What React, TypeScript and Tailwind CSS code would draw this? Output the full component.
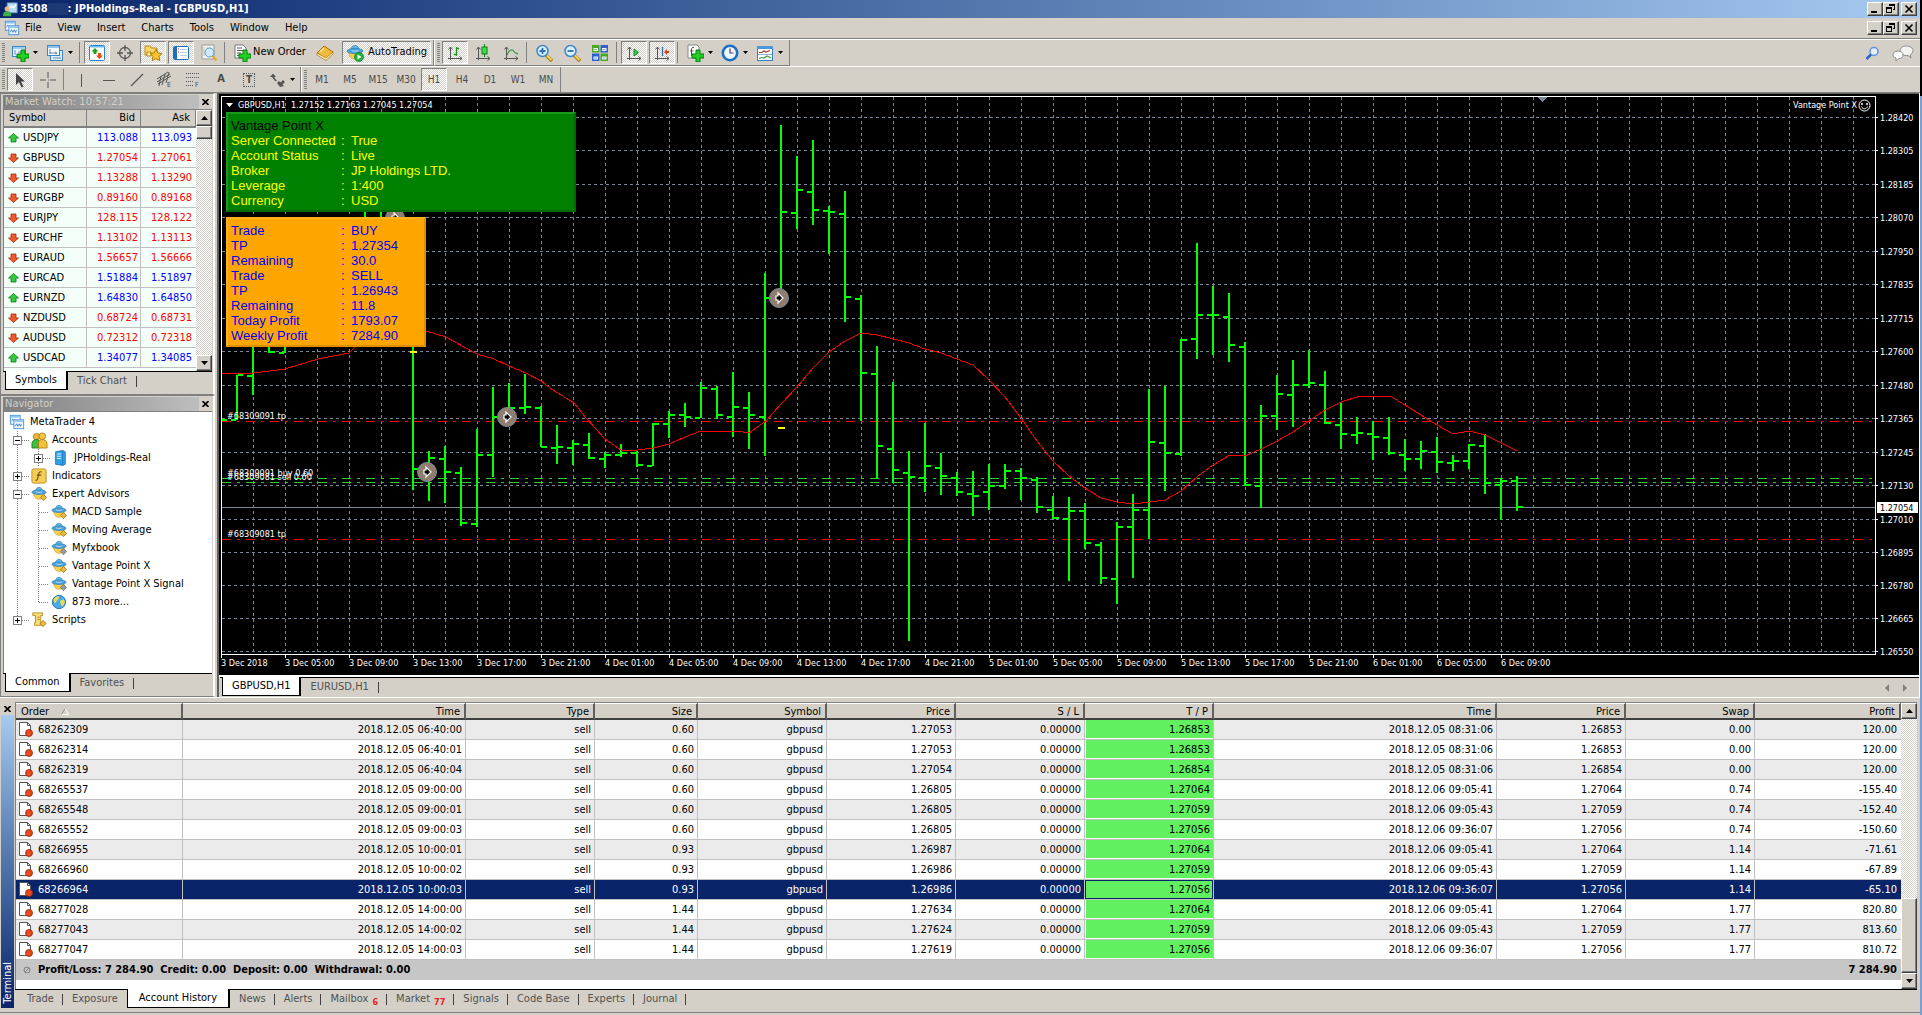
import type { ReactNode } from "react";
import clsx from "clsx";

const RAISED =
  "border border-white border-r-[#404040] border-b-[#404040] bg-[#d4d0c8] shadow-[inset_-1px_-1px_0_#808080]";
const DITHER = "bg-[repeating-conic-gradient(#fff_0_25%,#d4d0c8_0_50%)] bg-[length:2px_2px]";

type Direction = "up" | "down";

const quotes: { symbol: string; bid: string; ask: string; dir: Direction; blue: boolean }[] = [
  { symbol: "USDJPY", bid: "113.088", ask: "113.093", dir: "up", blue: true },
  { symbol: "GBPUSD", bid: "1.27054", ask: "1.27061", dir: "down", blue: false },
  { symbol: "EURUSD", bid: "1.13288", ask: "1.13290", dir: "down", blue: false },
  { symbol: "EURGBP", bid: "0.89160", ask: "0.89168", dir: "down", blue: false },
  { symbol: "EURJPY", bid: "128.115", ask: "128.122", dir: "down", blue: false },
  { symbol: "EURCHF", bid: "1.13102", ask: "1.13113", dir: "down", blue: false },
  { symbol: "EURAUD", bid: "1.56657", ask: "1.56666", dir: "down", blue: false },
  { symbol: "EURCAD", bid: "1.51884", ask: "1.51897", dir: "up", blue: true },
  { symbol: "EURNZD", bid: "1.64830", ask: "1.64850", dir: "up", blue: true },
  { symbol: "NZDUSD", bid: "0.68724", ask: "0.68731", dir: "down", blue: false },
  { symbol: "AUDUSD", bid: "0.72312", ask: "0.72318", dir: "down", blue: false },
  { symbol: "USDCAD", bid: "1.34077", ask: "1.34085", dir: "up", blue: true },
];

const orders: string[][] = [
  ["68262309", "2018.12.05 06:40:00", "0.60", "1.27053", "1.26853", "2018.12.05 08:31:06", "0.00", "120.00"],
  ["68262314", "2018.12.05 06:40:01", "0.60", "1.27053", "1.26853", "2018.12.05 08:31:06", "0.00", "120.00"],
  ["68262319", "2018.12.05 06:40:04", "0.60", "1.27054", "1.26854", "2018.12.05 08:31:06", "0.00", "120.00"],
  ["68265537", "2018.12.05 09:00:00", "0.60", "1.26805", "1.27064", "2018.12.06 09:05:41", "0.74", "-155.40"],
  ["68265548", "2018.12.05 09:00:01", "0.60", "1.26805", "1.27059", "2018.12.06 09:05:43", "0.74", "-152.40"],
  ["68265552", "2018.12.05 09:00:03", "0.60", "1.26805", "1.27056", "2018.12.06 09:36:07", "0.74", "-150.60"],
  ["68266955", "2018.12.05 10:00:01", "0.93", "1.26987", "1.27064", "2018.12.06 09:05:41", "1.14", "-71.61"],
  ["68266960", "2018.12.05 10:00:02", "0.93", "1.26986", "1.27059", "2018.12.06 09:05:43", "1.14", "-67.89"],
  ["68266964", "2018.12.05 10:00:03", "0.93", "1.26986", "1.27056", "2018.12.06 09:36:07", "1.14", "-65.10"],
  ["68277028", "2018.12.05 14:00:00", "1.44", "1.27634", "1.27064", "2018.12.06 09:05:41", "1.77", "820.80"],
  ["68277043", "2018.12.05 14:00:02", "1.44", "1.27624", "1.27059", "2018.12.06 09:05:43", "1.77", "813.60"],
  ["68277047", "2018.12.05 14:00:03", "1.44", "1.27619", "1.27056", "2018.12.06 09:36:07", "1.77", "810.72"],
];
const SELECTED_ORDER = "68266964";

// [high, low, open, close] per hour, in chart pixels; null where no tick is drawn
const bars: (number | null)[][] = [
  [339, 439, null, 420], [375, 420, 419, 375], [300, 395, 375, null], [300, 353, null, 352],
  [300, 353, 352, null], [260, 340, null, null], [240, 330, null, null], [230, 320, null, null],
  [220, 300, null, null], [190, 300, null, null], [190, 300, null, null], [200, 216, null, null],
  [300, 490, null, 469], [451, 501, null, 458], [446, 503, 458, 472], [467, 526, 472, 523],
  [429, 527, 523, 455], [387, 477, 454, 417], [383, 421, null, 408], [374, 414, 407, 407],
  [406, 447, 407, 447], [425, 464, 447, 447], [440, 465, 447, 444], [433, 459, 444, 458],
  [452, 468, 458, 455], [444, 457, 454, 453], [451, 467, 452, 465], [423, 466, 465, 424],
  [411, 438, 423, 415], [403, 427, 414, 417], [382, 418, 417, 388], [386, 419, 388, 415],
  [372, 437, 416, 407], [392, 449, 407, 415], [273, 456, 416, 298], [125, 298, null, 212],
  [156, 229, 212, 190], [140, 225, 191, 210], [206, 254, 210, 212], [191, 322, 213, 297],
  [295, 421, 298, 373], [346, 479, 373, 446], [382, 483, 448, 470], [451, 641, 472, 477],
  [423, 492, 477, 466], [453, 495, 467, 476], [472, 496, 477, 492], [471, 516, 493, 496],
  [464, 510, 491, 486], [464, 489, 485, 471], [468, 500, 470, 478], [477, 513, 479, 507],
  [496, 519, 509, 518], [497, 581, 518, 511], [503, 549, 510, 543], [542, 584, 544, 578],
  [522, 604, 578, 527], [494, 578, 526, 510], [389, 539, 509, 442], [386, 491, 442, 453],
  [339, 456, 453, 340], [243, 359, 338, 315], [286, 355, 314, 315], [293, 362, 316, 345],
  [342, 486, 346, 485], [405, 508, 485, 416], [375, 430, 415, 394], [360, 427, 394, 385],
  [350, 388, 384, 383], [371, 424, 384, 423], [403, 449, 424, 434], [417, 444, 434, 433],
  [421, 460, 433, 437], [417, 455, 437, 453], [439, 471, 454, 459], [441, 469, 458, 451],
  [437, 473, 451, 462], [455, 471, 462, 461], [444, 469, 460, 445], [434, 494, 445, 483],
  [478, 520, 484, 481], [476, 511, 480, 507],
];

const movingAverage =
  "221,373 244,374 253,373 270,371 285,369 318,359 349,353 355,347 380,332 405,327 426,331 446,337 464,347 477,354 494,359 509,366 526,373 541,381 553,390 574,403 586,418 605,439 621,450 638,450 653,448 669,444 685,437 701,431 736,431 749,433 766,421 781,404 797,387 813,368 829,352 845,341 861,333 877,335 894,339 909,343 925,349 941,353 957,359 973,365 989,380 1005,397 1021,418 1037,441 1053,461 1069,476 1085,488 1101,498 1117,502 1133,504 1149,502 1165,500 1181,491 1197,477 1213,465 1230,455 1245,456 1261,449 1277,441 1293,432 1309,421 1325,410 1341,402 1357,397 1365,396 1390,396 1405,405 1421,415 1437,425 1453,434 1469,431 1485,435 1501,443 1517,451";

const priceLevels: [string, number][] = [
  ["1.28420", 117], ["1.28305", 150], ["1.28185", 184], ["1.28070", 217], ["1.27950", 251],
  ["1.27835", 284], ["1.27715", 318], ["1.27600", 351], ["1.27480", 385], ["1.27365", 418],
  ["1.27245", 452], ["1.27130", 485], ["1.27010", 519], ["1.26895", 552], ["1.26780", 585],
  ["1.26665", 618], ["1.26550", 651],
];

const timeLabels = [
  "3 Dec 2018", "3 Dec 05:00", "3 Dec 09:00", "3 Dec 13:00", "3 Dec 17:00", "3 Dec 21:00",
  "4 Dec 01:00", "4 Dec 05:00", "4 Dec 09:00", "4 Dec 13:00", "4 Dec 17:00", "4 Dec 21:00",
  "5 Dec 01:00", "5 Dec 05:00", "5 Dec 09:00", "5 Dec 13:00", "5 Dec 17:00", "5 Dec 21:00",
  "6 Dec 01:00", "6 Dec 05:00", "6 Dec 09:00",
];

function Icon({ children, size = 18 }: { children: ReactNode; size?: number }) {
  return (
    <svg width={size} height={size} viewBox="0 0 18 18" fill="none" className="shrink-0" aria-hidden="true">
      {children}
    </svg>
  );
}

const GreenPlus = () => (
  <path d="M10 6h4v4h4v4h-4v4h-4v-4H6v-4h4z" fill="#1fd21f" stroke="#067a10" strokeWidth="1" />
);

const Axes = () => (
  <path d="M4.500 3v13M2 14.500h14M2.500 5.500l2-2.500 2 2.500M13.500 12.500l2.500 2-2.500 2" stroke="#555" />
);

function NewChartIcon() {
  return (
    <Icon>
      <rect x="1.500" y="2.500" width="13" height="10" fill="#eaf4fd" stroke="#3b86c4" />
      <path d="M2 3h12v2H2z" fill="#9ccdf2" />
      <path d="M4 6v5M7 8h3" stroke="#6c8ea8" />
      <GreenPlus />
    </Icon>
  );
}

function ProfilesIcon() {
  return (
    <Icon>
      <rect x="4.500" y="6.500" width="12" height="10" fill="#dceefb" stroke="#3b86c4" />
      <rect x="1.500" y="1.500" width="12" height="10" fill="#f2f9ff" stroke="#3b86c4" />
      <path d="M2 2h11v2H2z" fill="#8dc3ee" />
      <path d="M4 5v5M3 9h8M9 8l2 1-2 1M7 14h8" stroke="#6c8ea8" />
    </Icon>
  );
}

function MarketWatchIcon() {
  return (
    <Icon>
      <rect x="1.500" y="1.500" width="15" height="15" rx="1" fill="#fff" stroke="#2b86d1" />
      <path d="M2 2h14v1.500H2z" fill="#6db8ef" />
      <path d="M7 4l3.500 3.500H8.500V10h-3V7.500h-2z" fill="#19a319" />
      <path d="M11.500 15L8 11.500h2V9h3v2.500h2z" fill="#e34a1c" />
    </Icon>
  );
}

function CrosshairIcon() {
  return (
    <Icon>
      <circle cx="9" cy="9" r="5.500" stroke="#555" strokeWidth="1.300" />
      <path d="M9 1v6M9 11v6M1 9h6M11 9h6" stroke="#555" strokeWidth="1.300" />
    </Icon>
  );
}

function StarFolderIcon() {
  return (
    <Icon>
      <path d="M1 2h5l1 2h6v7H1z" fill="#f8d868" stroke="#bf8a12" />
      <path d="M3 8h4v4H3z" fill="#fdf0a8" stroke="#bf8a12" />
      <path d="M12 5l1.900 4 4.100.5-3 2.900.8 4.200L12 14.600l-3.800 2 .8-4.200-3-2.900 4.100-.5z" fill="#fbc52f" stroke="#b77c0a" />
    </Icon>
  );
}

function NavigatorIcon() {
  return (
    <Icon>
      <rect x="1.500" y="2.500" width="15" height="13" rx="1" fill="#fff" stroke="#1f6fc0" />
      <path d="M2 3h3v12H2z" fill="#1f6fc0" />
      <path d="M6 5h1M6 8h1" stroke="#d22" />
      <path d="M8 5.500h7M8 8.500h7M8 11.500h7" stroke="#b5cfe4" />
    </Icon>
  );
}

function TesterIcon() {
  return (
    <Icon>
      <path d="M2 1h12v14H2z" fill="#f4f4f0" stroke="#9a9a94" />
      <path d="M4 3v9M7 3v9M10 3v9" stroke="#c5c0b0" />
      <circle cx="9.500" cy="8.500" r="4.500" fill="#cfe8fb" stroke="#5b9ac9" />
      <path d="M12.500 12l4 4.500" stroke="#e0a92d" strokeWidth="2.500" />
    </Icon>
  );
}

function NewOrderIcon() {
  return (
    <Icon>
      <path d="M2 1h8l3 3v10H2z" fill="#fff" stroke="#777" />
      <path d="M4 4h5M4 6.500h7M4 9h4M4 11.500h3" stroke="#555" />
      <GreenPlus />
    </Icon>
  );
}

function BookIcon() {
  return (
    <Icon>
      <path d="M1 9l7-7 9 6-7 8z" fill="#f0bb3c" stroke="#a86c0b" />
      <path d="M1 9l9 5 7-6v2l-7 6.500L1 11z" fill="#fff3c4" stroke="#a86c0b" strokeWidth=".7" />
      <path d="M4 8l4-4" stroke="#fce39a" strokeWidth="1.500" />
    </Icon>
  );
}

function HatShape() {
  return (
    <>
      <path d="M3 8c0 4 2.500 7 6 7s6-3 6-7z" fill="#f7cf4e" stroke="#c89417" strokeWidth=".7" />
      <path d="M5 6c0-6 8-6 8 0z" fill="#66b7e6" stroke="#2b7cb3" strokeWidth=".7" />
      <ellipse cx="9" cy="7" rx="8" ry="2.600" fill="#4ba3d9" stroke="#2b7cb3" strokeWidth=".7" />
      <path d="M5.500 6.500c2 1 5 1 7 0" stroke="#b9e1f7" />
    </>
  );
}

function AutoTradingIcon() {
  return (
    <Icon>
      <HatShape />
      <circle cx="13" cy="13" r="4.500" fill="#1fb43a" stroke="#0c7d22" strokeWidth=".7" />
      <path d="M11.500 10.500l4 2.500-4 2.500z" fill="#fff" />
    </Icon>
  );
}

function AdvisorIcon({ gray }: { gray?: boolean }) {
  return (
    <Icon size={16}>
      <HatShape />
      <path
        d="M14 9.500l3.500 3.500-3.500 3.500-3.500-3.500z"
        fill={gray ? "#9b9b9b" : "#e8b93c"}
        stroke={gray ? "#666" : "#96690a"}
        strokeWidth=".8"
      />
    </Icon>
  );
}

function BarChartIcon() {
  return (
    <Icon>
      <Axes />
      <path d="M10.500 3v9M8 10.500h2.500M10.500 4.500H13" stroke="#179a17" strokeWidth="1.300" />
    </Icon>
  );
}

function CandleIcon() {
  return (
    <Icon>
      <Axes />
      <path d="M10.500 0v13" stroke="#0c7d12" />
      <rect x="8" y="3" width="5" height="7" fill="#3be04e" stroke="#0c7d12" />
    </Icon>
  );
}

function LineChartIcon() {
  return (
    <Icon>
      <Axes />
      <path d="M5 11c2-5 5-6.500 7-3.500 1 1.500 2 2 4 2.500" stroke="#3a9a44" strokeWidth="1.300" />
    </Icon>
  );
}

function ZoomIcon({ plus }: { plus?: boolean }) {
  return (
    <Icon>
      <path d="M11 11l6 6" stroke="#a87c12" strokeWidth="3.500" />
      <path d="M11.500 11l5 5" stroke="#f4d35a" strokeWidth="2" />
      <circle cx="7.500" cy="7" r="5.500" fill="#d7effc" stroke="#3e87c6" strokeWidth="1.500" />
      <path d={plus ? "M7.500 4v6M4.500 7h6" : "M4.500 7h6"} stroke="#2d6fae" strokeWidth="1.800" />
    </Icon>
  );
}

function TileIcon() {
  return (
    <Icon>
      <path d="M1 1h7.500v7.500H1zM9.500 9.500H17V17H9.500z" fill="#4aa81b" />
      <path d="M9.500 1H17v7.500H9.500zM1 9.500h7.500V17H1z" fill="#2d5fd0" />
      <path d="M2.500 4H7v3H2.500zM11 4h4.500v3H11zM2.500 12.500H7v3H2.500zM11 12.500h4.500v3H11z" fill="#eef6ff" />
      <path d="M3 5.500h3M11.500 5.500h3M3 14h3M11.500 14h3" stroke="#8aa7cc" />
    </Icon>
  );
}

function ScrollIcon() {
  return (
    <Icon>
      <Axes />
      <path d="M9 5l4.500 3.500L9 12z" fill="#2fd040" stroke="#0d8a1d" />
    </Icon>
  );
}

function ShiftIcon() {
  return (
    <Icon>
      <Axes />
      <path d="M9.500 3v9" stroke="#2a6fb8" strokeWidth="1.300" />
      <path d="M11 8l3-3v2h2v2h-2v2z" fill="#d8431a" />
    </Icon>
  );
}

function IndicatorsIcon() {
  return (
    <Icon>
      <path d="M2 1h9l2 2v11H2z" fill="#fff" stroke="#888" />
      <path d="M8 3.500c-2-.5-2.500.5-2.500 2.500v6M4 7h3.500" stroke="#555" />
      <GreenPlus />
    </Icon>
  );
}

function ClockIcon() {
  return (
    <Icon>
      <circle cx="9" cy="9" r="7.200" fill="#eef6fc" stroke="#1d6fc2" strokeWidth="2.600" />
      <path d="M9 4.500V9h3.500" stroke="#444" strokeWidth="1.200" />
    </Icon>
  );
}

function TemplateIcon() {
  return (
    <Icon>
      <rect x="1.500" y="2.500" width="15" height="14" fill="#fff" stroke="#3b7fc0" />
      <path d="M1 2h16v3H1z" fill="#4b96da" />
      <path d="M3 8.500h3l2-1.500 2 1 4-1.500" stroke="#a33b22" strokeWidth="1.200" />
      <path d="M2 10.500h14" stroke="#3b7fc0" strokeWidth=".6" />
      <path d="M3 14.500l3-1 2 .5 3-2 4 2" stroke="#3a9a44" strokeWidth="1.200" />
    </Icon>
  );
}

function PagesIcon({ size = 16 }: { size?: number }) {
  return (
    <Icon size={size}>
      <rect x="1.500" y="1.500" width="11" height="10" fill="#f2f9ff" stroke="#3f8ddb" />
      <path d="M2 2h10v2H2z" fill="#8dc3ee" />
      <rect x="5.500" y="6.500" width="11" height="10" fill="#f2f9ff" stroke="#3f8ddb" />
      <path d="M6 7h10v2H6z" fill="#8dc3ee" />
      <path d="M3 8l1-2 1.500 1M7 14l1.500-3 1.500 3 1.500-3 1.500 3L14 11" stroke="#2a6fb8" strokeWidth=".9" />
    </Icon>
  );
}

function ToolButton({
  label,
  pressed,
  menu,
  children,
}: {
  label: string;
  pressed?: boolean;
  menu?: boolean;
  children: ReactNode;
}) {
  return (
    <button
      type="button"
      aria-label={label}
      aria-pressed={pressed}
      className={clsx(
        "flex h-[23px] shrink-0 items-center justify-center border text-[#4a4a4a]",
        menu ? "w-[35px] gap-1" : "w-[26px]",
        pressed ? ["border-[#808080] border-r-white border-b-white", DITHER] : "border-transparent",
      )}
    >
      {children}
      {menu && (
        <svg width="5" height="3" className="shrink-0" aria-hidden="true">
          <path d="M0 0h5L2.500 3z" fill="#000" />
        </svg>
      )}
    </button>
  );
}

function Grip() {
  return (
    <span className="mx-[2px] h-[19px] w-[3px] shrink-0 bg-[repeating-linear-gradient(#808080_0_1px,#d4d0c8_1px_2px)]" />
  );
}

function Separator() {
  return <span className="mr-1 ml-[2px] h-[21px] w-px shrink-0 bg-[#808080]" />;
}

function CaptionButtons() {
  return (
    <div className="ml-auto flex pr-[3px]">
      <button type="button" aria-label="Minimize" className={clsx("h-[14px] w-4", RAISED)}>
        <svg width="14" height="12" aria-hidden="true"><path d="M3 8h6v2H3z" /></svg>
      </button>
      <button type="button" aria-label="Restore" className={clsx("h-[14px] w-4", RAISED)}>
        <svg width="14" height="12" fill="none" stroke="#000" shapeRendering="crispEdges" aria-hidden="true">
          <path d="M5.500 3V1.500h5v5H9M5 2.500h6M2.500 4.500h5v5h-5zM2 5.500h6" />
        </svg>
      </button>
      <button type="button" aria-label="Close" className={clsx("ml-[2px] h-[14px] w-4", RAISED)}>
        <svg width="14" height="12" aria-hidden="true">
          <path d="M3.500 2.500l7 7M10.500 2.500l-7 7" stroke="#000" strokeWidth="1.600" />
        </svg>
      </button>
    </div>
  );
}

function ScrollButton({ dir }: { dir: Direction }) {
  return (
    <button
      type="button"
      aria-label={`Scroll ${dir}`}
      className={clsx("flex h-4 w-4 shrink-0 items-center justify-center", RAISED)}
    >
      <svg width="7" height="4" aria-hidden="true">
        <path d={dir === "up" ? "M0 4h7L3.500 0z" : "M0 0h7L3.500 4z"} />
      </svg>
    </button>
  );
}

function PanelTitle({ children }: { children: ReactNode }) {
  return (
    <div className="flex h-[14px] shrink-0 items-center">
      <h2 className="h-[14px] flex-1 bg-linear-to-r from-[#808080] to-[#bebebe] pl-[2px] leading-[13px] text-[#d4d0c8]">
        {children}
      </h2>
      <button type="button" aria-label="Close panel" className="flex w-[13px] justify-center">
        <svg width="7" height="6" aria-hidden="true">
          <path d="M.5 0l6 6M6.500 0l-6 6" stroke="#000" strokeWidth="1.600" />
        </svg>
      </button>
    </div>
  );
}

function Tabs({ active, idle, children }: { active: string; idle: string; children?: ReactNode }) {
  return (
    <div role="tablist" className="flex h-5 shrink-0 border-t border-black">
      <span className="w-[2px]" />
      <button
        type="button"
        role="tab"
        aria-selected="true"
        className="-mt-px mb-px border-r-2 border-b border-l border-black bg-white px-[9px]"
      >
        {active}
      </button>
      <button type="button" role="tab" aria-selected="false" className="px-[9px] text-[#505050]">
        {idle}
      </button>
      <span className="my-1 w-px bg-[#404040]" />
      {children}
    </div>
  );
}

function QuoteArrow({ dir }: { dir: Direction }) {
  return (
    <svg width="11" height="10" viewBox="0 0 11 10" className="shrink-0" aria-hidden="true">
      {dir === "up" ? (
        <path d="M5.500.5l5 4.500H8v4H3V5H.5z" fill="#35c83c" stroke="#0e7a1b" strokeWidth=".8" />
      ) : (
        <path d="M5.500 9.500l-5-4.500H3V1h5v4h2.500z" fill="#ee5a2a" stroke="#9c2c0c" strokeWidth=".8" />
      )}
    </svg>
  );
}

function MarketWatch() {
  const head = "h-[18px] border-r border-b-2 border-[#808080] bg-[#d4d0c8] p-0 font-normal";
  const cell = "border-b border-[#c0c0c0] p-0 text-right";
  return (
    <section className="border border-r-2 border-[#808080] border-r-white pt-px pr-px pb-[3px] pl-[2px]">
      <PanelTitle>Market Watch: 10:57:21</PanelTitle>
      <div className="flex h-[262px] overflow-hidden border-t border-l border-[#808080] bg-[#f4fff9]">
        <table className="w-full table-fixed border-separate border-spacing-0 self-start leading-[14px]">
          <thead>
            <tr>
              <th className={clsx(head, "w-[83px] pl-[5px] text-left")}>Symbol</th>
              <th className={clsx(head, "w-[54px] pr-[5px] text-right")}>Bid</th>
              <th className={clsx(head, "pr-[5px] text-right")}>Ask</th>
            </tr>
          </thead>
          <tbody>
            {quotes.map((quote) => (
              <tr key={quote.symbol} className={quote.blue ? "text-[#0000ff]" : "text-[#ff0000]"}>
                <td className="h-5 border-r border-b border-[#c0c0c0] p-0 text-black">
                  <div className="flex items-center gap-1 pl-1">
                    <QuoteArrow dir={quote.dir} />
                    {quote.symbol}
                  </div>
                </td>
                <td className={clsx(cell, "border-r pr-[2px]")}>{quote.bid}</td>
                <td className={clsx(cell, "pr-1")}>{quote.ask}</td>
              </tr>
            ))}
          </tbody>
        </table>
        <div className={clsx("flex w-4 shrink-0 flex-col", DITHER)}>
          <ScrollButton dir="up" />
          <div className={clsx("h-[13px]", RAISED)} />
          <span className="flex-1" />
          <ScrollButton dir="down" />
        </div>
      </div>
      <Tabs active="Symbols" idle="Tick Chart" />
    </section>
  );
}

function Expander({ open }: { open?: boolean }) {
  return (
    <svg width="9" height="9" className="relative shrink-0" shapeRendering="crispEdges" aria-hidden="true">
      <rect x=".5" y=".5" width="8" height="8" fill="#fff" stroke="#808080" />
      <path d={open ? "M2 4.500h5" : "M2 4.500h5M4.500 2v5"} stroke="#000" />
    </svg>
  );
}

function Navigator() {
  const advisors: [string, boolean][] = [
    ["MACD Sample", false],
    ["Moving Average", false],
    ["Myfxbook", true],
    ["Vantage Point X", false],
    ["Vantage Point X Signal", true],
  ];
  const row = "relative flex h-[18px] items-center";
  return (
    <section className="flex flex-1 flex-col border border-r-2 border-[#808080] border-r-white pt-px pr-px pb-[3px] pl-[2px]">
      <PanelTitle>Navigator</PanelTitle>
      <div className="relative min-h-[262px] flex-1 border-t border-l border-[#808080] bg-white pt-px">
        <svg className="absolute inset-0 h-full w-full" fill="none" stroke="#808080" strokeDasharray="1 1" shapeRendering="crispEdges" aria-hidden="true">
          <path d="M13.500 19v190M34.500 37v18M34.500 91v100M18 28.500h8M39 46.500h7M18 64.500h8M18 82.500h8M35 100.500h10M35 118.500h10M35 136.500h10M35 154.500h10M35 172.500h10M35 190.500h10M18 208.500h8" />
        </svg>
        <ul>
          <li className={clsx(row, "gap-[5px] pl-[5px]")}><PagesIcon />MetaTrader 4</li>
          <li className={clsx(row, "gap-1 pl-[9px]")}>
            <Expander open />
            <span className="w-px" />
            <Icon size={17}>
              <circle cx="6" cy="5" r="3.500" fill="#e9b53a" stroke="#a77209" strokeWidth=".8" />
              <circle cx="12" cy="4.500" r="3.500" fill="#f3c64b" stroke="#a77209" strokeWidth=".8" />
              <path d="M1 17V12c0-3 3-4 5-4s3 1 3 4v5z" fill="#3fbe3f" stroke="#187818" strokeWidth=".8" />
              <path d="M8 17v-6c0-2 2-3 4-3s5 1 5 4v5z" fill="#f0c03e" stroke="#a77209" strokeWidth=".8" />
            </Icon>
            Accounts
          </li>
          <li className={clsx(row, "gap-[9px] pl-[30px]")}>
            <Expander />
            <Icon size={16}>
              <path d="M4 2l8-1.500 3 1.500v14l-3 1.500L4 16z" fill="#2ea1ea" stroke="#14629f" strokeWidth=".8" />
              <path d="M12 1v16" stroke="#14629f" strokeWidth=".7" />
              <path d="M5.500 4.500h5M5.500 7h5M5.500 9.500h5" stroke="#d9f1ff" strokeWidth="1.200" />
            </Icon>
            <span className="-ml-[3px]">JPHoldings-Real</span>
          </li>
          <li className={clsx(row, "gap-1 pl-[9px]")}>
            <Expander />
            <span className="w-px" />
            <Icon size={16}>
              <rect x="1" y="1" width="16" height="16" rx="2" fill="#f4ce57" stroke="#bb8a18" />
              <path d="M12 4.500c-2.500-1-3 .5-3.400 2.500L7.500 12c-.4 1.500-1 2-2.500 1.500M6.500 8h5" stroke="#6b4b05" strokeWidth="1.200" />
            </Icon>
            <span className="pl-px">Indicators</span>
          </li>
          <li className={clsx(row, "gap-1 pl-[9px]")}>
            <Expander open />
            <span className="w-px" />
            <AdvisorIcon />
            <span className="pl-px">Expert Advisors</span>
          </li>
          {advisors.map(([name, gray]) => (
            <li key={name} className={clsx(row, "gap-[5px] pl-[47px]")}>
              <AdvisorIcon gray={gray} />
              {name}
            </li>
          ))}
          <li className={clsx(row, "gap-[5px] pl-[47px]")}>
            <Icon size={16}>
              <circle cx="9" cy="9" r="7.500" fill="#4aa9ea" stroke="#2170b0" />
              <path d="M3 6c2-4 5-4 6-3s-1 3-2 4-2 4-3 3-1-3-1-4zM10 8l4-2 2 3-3 5-2-2z" fill="#e3dc5a" />
            </Icon>
            873 more...
          </li>
          <li className={clsx(row, "gap-1 pl-[9px]")}>
            <Expander />
            <span className="w-px" />
            <Icon size={16}>
              <path d="M2 1h11v3h-2v8h3v3H4v-3h1V4H2z" fill="#f7dc7c" stroke="#b98a1c" />
              <path d="M7 6h3M7 8.500h3" stroke="#b98a1c" />
              <path d="M13.500 9.500L17 13l-3.500 3.500L10 13z" fill="#e8b93c" stroke="#96690a" strokeWidth=".8" />
            </Icon>
            <span className="pl-px">Scripts</span>
          </li>
        </ul>
      </div>
      <Tabs active="Common" idle="Favorites" />
    </section>
  );
}

function OrderMarker({ x, y }: { x: number; y: number }) {
  return (
    <g shapeRendering="auto">
      <circle cx={x} cy={y} r="9.500" fill="#8f7d6f" stroke="#778899" />
      <path d={`M${x - 3} ${y - 2}h2v-3l5 5-5 5v-3h-2z`} fill="#000" stroke="#fff" strokeWidth="1.200" />
    </g>
  );
}

function Plot() {
  return (
    <svg className="absolute inset-0 h-full w-full" shapeRendering="crispEdges" role="img" aria-label="GBPUSD hourly bars">
      <g transform="translate(-222 -97)">
        <g stroke="#778899" strokeDasharray="3 3">
          {priceLevels.map(([price, y]) => (
            <line key={price} x1="222" x2="4000" y1={y + 0.5} y2={y + 0.5} />
          ))}
          {Array.from({ length: 51 }, (_, i) => (
            <line key={i} x1={253.5 + i * 32} x2={253.5 + i * 32} y1="97" y2="652" />
          ))}
        </g>
        <line x1="222" x2="4000" y1="507.500" y2="507.500" stroke="#778899" />
        <g strokeDasharray="9 6 3 6">
          <path d="M222 421.500H4000M222 539.500H4000" stroke="#ff0000" />
          <path d="M222 478.500H4000M222 482.500H4000" stroke="#32cd32" />
        </g>
        <path d="M1537 97h10l-5 5z" fill="#778899" />
        <g fill="#00ff00">
          {bars.map(([high, low, open, close], i) => {
            const x = 220 + i * 16;
            return (
              <g key={i}>
                <rect x={x} y={high!} width="2" height={low! - high!} />
                {open !== null && <rect x={x - 5} y={open} width="5" height="2" />}
                {close !== null && <rect x={x + 2} y={close - 1} width="5" height="2" />}
              </g>
            );
          })}
        </g>
        <path d="M410 351h7v2h-7zM778 427h7v2h-7z" fill="#ffff00" />
        <OrderMarker x={395} y={218} />
        <OrderMarker x={427} y={472} />
        <OrderMarker x={507} y={417} />
        <OrderMarker x={779} y={298} />
        <polyline points={movingAverage} fill="none" stroke="#ff0000" />
        <g fill="#fff" shapeRendering="auto">
          <text x="227" y="419">#68309091 tp</text>
          <text x="227" y="476">#68309091 buy 0.60</text>
          <text x="227" y="480">#68309081 sell 0.60</text>
          <text x="227" y="537">#68309081 tp</text>
        </g>
      </g>
    </svg>
  );
}

function InfoRows({ rows }: { rows: string[][] }) {
  return (
    <dl>
      {rows.map(([name, value], i) => (
        <div key={i} className="flex">
          <dt className="w-[110px]">{name}</dt>
          <dd>
            <span className="inline-block w-[10px]">:</span>
            {value}
          </dd>
        </div>
      ))}
    </dl>
  );
}

function ChartWindow() {
  return (
    <section className="flex min-w-0 flex-1 flex-col border-r border-l-2 border-[#606060] border-r-white">
      <div className="flex min-h-[582px] flex-1 flex-col border-t border-[#606060] bg-black pt-[2px] pl-[2px] font-['DejaVu_Sans_Condensed',sans-serif] text-[9px] text-white">
        <div className="flex flex-1">
          <div className="relative min-w-0 flex-1 border border-white">
            <Plot />
            <div className="relative flex justify-between pt-[2px] pr-1 pl-1 leading-[13px]">
              <p className="flex items-center gap-1 whitespace-pre">
                <svg width="8" height="5" aria-hidden="true"><path d="M0 0h7L3.500 4z" fill="#fff" /></svg>
                GBPUSD,H1  1.27152 1.27163 1.27045 1.27054
              </p>
              <p className="flex items-center gap-px">
                Vantage Point X
                <svg width="13" height="13" fill="none" stroke="#fff" aria-hidden="true">
                  <circle cx="6.500" cy="6.500" r="5.500" />
                  <path d="M4 4v2M9 4v2" strokeWidth="1.500" />
                  <path d="M3.500 7.500c1 3 5 3 6 0" />
                </svg>
              </p>
            </div>
            <div className="absolute top-[15px] left-1 h-[100px] w-[350px] border-2 border-[#1a9a1a] border-r-[#006a00] border-b-[#006a00] bg-[#008000] pt-1 pl-[3px] font-['Liberation_Sans',sans-serif] text-[13px] leading-[15px] text-[#ffff00]">
              <p className="text-black">Vantage Point X</p>
              <InfoRows
                rows={[
                  ["Server Connected", "True"],
                  ["Account Status", "Live"],
                  ["Broker", "JP Holdings LTD."],
                  ["Leverage", "1:400"],
                  ["Currency", "USD"],
                ]}
              />
            </div>
            <div className="absolute top-[120px] left-1 h-[130px] w-[200px] border-2 border-[#ffb31a] border-r-[#e08e00] border-b-[#e08e00] bg-[#ffa500] pt-1 pl-[3px] font-['Liberation_Sans',sans-serif] text-[13px] leading-[15px] text-[#0000ff]">
              <InfoRows
                rows={[
                  ["Trade", "BUY"],
                  ["TP", "1.27354"],
                  ["Remaining", "30.0"],
                  ["Trade", "SELL"],
                  ["TP", "1.26943"],
                  ["Remaining", "11.8"],
                  ["Today Profit", "1793.07"],
                  ["Weekly Profit", "7284.90"],
                ]}
              />
            </div>
          </div>
          <svg className="w-[43px] shrink-0 self-stretch" fill="#fff" aria-hidden="true">
            <g transform="translate(0 -96)">
              {priceLevels.map(([price, y]) => (
                <g key={price}>
                  <rect y={y} width="2" height="1" />
                  <text x="4" y={y + 4}>{price}</text>
                </g>
              ))}
              <rect x="1" y="502" width="41" height="11" />
              <text x="4" y="511" fill="#000">1.27054</text>
            </g>
          </svg>
        </div>
        <div className="flex h-5 overflow-hidden">
          {timeLabels.map((label) => (
            <span key={label} className="w-16 shrink-0 whitespace-nowrap before:block before:h-[3px] before:w-px before:bg-white">
              <span className="block leading-[11px]">{label}</span>
            </span>
          ))}
        </div>
      </div>
      <div className="border-t-2 border-white pl-px">
        <Tabs active="GBPUSD,H1" idle="EURUSD,H1">
          <svg width="30" height="8" className="mr-2 ml-auto self-center" fill="#808080" aria-hidden="true">
            <path d="M8 0v8L4 4zM22 0v8l4-4z" />
          </svg>
        </Tabs>
      </div>
    </section>
  );
}

const columns: [string, string][] = [
  ["Order", "w-[167px]"], ["Time", "w-[283px]"], ["Type", "w-[129px]"], ["Size", "w-[103px]"],
  ["Symbol", "w-[129px]"], ["Price", "w-[129px]"], ["S / L", "w-[129px]"], ["T / P", "w-[129px]"],
  ["Time", "w-[283px]"], ["Price", "w-[129px]"], ["Swap", "w-[129px]"], ["Profit", ""],
];

function Terminal() {
  const cell = "border-r border-b border-[#c0c0c0] p-0 pr-[3px]";
  const tabs: [string, string?][] = [
    ["Trade"], ["Exposure"], ["Account History"], ["News"], ["Alerts"], ["Mailbox", "6"],
    ["Market", "77"], ["Signals"], ["Code Base"], ["Experts"], ["Journal"],
  ];
  return (
    <section className="flex border-t border-b border-t-white border-b-[#808080] pt-1 pb-1">
      <div className="flex w-[15px] shrink-0 flex-col items-center">
        <button type="button" aria-label="Close terminal" className="flex h-[13px] items-center">
          <svg width="7" height="6" aria-hidden="true">
            <path d="M.5 0l6 6M6.500 0l-6 6" stroke="#000" strokeWidth="1.600" />
          </svg>
        </button>
        <div className="flex w-[13px] flex-1 items-center bg-linear-to-b from-[#a6caf0] to-[#0a246a] text-white [writing-mode:vertical-rl]">
          <h2 className="mt-auto rotate-180 pt-1 leading-[13px]">Terminal</h2>
        </div>
      </div>
      <div className="min-w-0 flex-1">
        <div className="flex h-[287px] border-t border-l border-[#808080] bg-white">
          <div className="min-w-0 flex-1">
            <table className="w-full table-fixed border-separate border-spacing-0 text-right leading-[13px]">
              <thead>
                <tr>
                  {columns.map(([name, width], i) => (
                    <th
                      key={i}
                      className={clsx(
                        "h-[17px] border-t border-r-2 border-b-2 border-t-white border-r-[#606060] border-b-[#404040] bg-[#d4d0c8] p-0 pr-1 font-normal",
                        width,
                        i === 0 && "pl-[5px] text-left",
                      )}
                    >
                      {name}
                      {i === 0 && (
                        <svg width="8" height="7" className="ml-3 inline" aria-hidden="true">
                          <path d="M4 .5L.5 6.500h7z" fill="none" stroke="#fff" />
                          <path d="M4 .5L.5 6.500" stroke="#808080" />
                        </svg>
                      )}
                    </th>
                  ))}
                </tr>
              </thead>
              <tbody>
                {orders.map(([id, time, size, price, close, closeTime, swap, profit], i) => {
                  const selected = id === SELECTED_ORDER;
                  return (
                    <tr
                      key={id}
                      className={clsx(
                        selected ? "bg-[#0a246a] text-white" : i % 2 === 0 ? "bg-[#ebebeb]" : "bg-white",
                      )}
                    >
                      <td className="h-5 border-r border-b border-[#c0c0c0] p-0 pl-[3px]">
                        <div className="flex items-center gap-[5px]">
                          <svg width="14" height="15" viewBox="0 0 14 15" aria-hidden="true">
                            <path d="M.5.5h8l3 3v10H.5z" fill="#fff" stroke="#555" />
                            <path d="M8.500.5v3h3" fill="none" stroke="#555" />
                            <circle cx="10" cy="11" r="3.500" fill="#e8481c" stroke="#8d260a" strokeWidth=".8" />
                          </svg>
                          {id}
                        </div>
                      </td>
                      <td className={cell}>{time}</td>
                      <td className={cell}>sell</td>
                      <td className={cell}>{size}</td>
                      <td className={cell}>gbpusd</td>
                      <td className={cell}>{price}</td>
                      <td className={cell}>0.00000</td>
                      <td
                        className={clsx(
                          cell,
                          "bg-[#60f060] bg-clip-padding text-black",
                          selected ? "shadow-[inset_0_0_0_1px_#0a246a]" : "shadow-[inset_1px_-1px_0_#fff]",
                        )}
                      >
                        {close}
                      </td>
                      <td className={cell}>{closeTime}</td>
                      <td className={cell}>{close}</td>
                      <td className={cell}>{swap}</td>
                      <td className="border-b border-[#c0c0c0] p-0 pr-1">{profit}</td>
                    </tr>
                  );
                })}
              </tbody>
            </table>
            <div className="flex h-5 items-center bg-[#c6c6c6] pr-1 pl-[7px] font-bold">
              <svg width="8" height="8" className="mr-[7px]" fill="none" stroke="#808080" aria-hidden="true">
                <circle cx="4" cy="4" r="3" />
                <path d="M2 6l4-4" />
              </svg>
              <span className="whitespace-pre">Profit/Loss: 7 284.90  Credit: 0.00  Deposit: 0.00  Withdrawal: 0.00</span>
              <span className="ml-auto">7 284.90</span>
            </div>
          </div>
          <div className={clsx("flex w-4 shrink-0 flex-col", DITHER)}>
            <ScrollButton dir="up" />
            <span className="flex-1" />
            <div className={clsx("h-[75px]", RAISED)} />
            <ScrollButton dir="down" />
          </div>
        </div>
        <div role="tablist" className="flex h-[19px] border-t border-black pl-[3px] text-[#505050]">
          {tabs.map(([name, count], i) => (
            <button
              key={name}
              type="button"
              role="tab"
              aria-selected={i === 2}
              className={clsx(
                "relative",
                i === 2
                  ? "-mt-px border-r-2 border-b border-l border-black bg-white px-[11px] text-black"
                  : "px-[9px]",
                i !== 2 && i !== 1 && "after:absolute after:top-1 after:right-0 after:h-[11px] after:w-px after:bg-[#404040]",
              )}
            >
              {name}
              {count && <span className="ml-1 align-[-3px] text-[9px] leading-none font-bold text-[#e8202a]">{count}</span>}
            </button>
          ))}
        </div>
      </div>
      <span className="w-[3px] shrink-0" />
    </section>
  );
}

export default function App() {
  const menus = ["File", "View", "Insert", "Charts", "Tools", "Window", "Help"];
  const periods = ["M1", "M5", "M15", "M30", "H1", "H4", "D1", "W1", "MN"];

  return (
    <div className="flex min-h-screen bg-[#d4d0c8] font-['DejaVu_Sans_Condensed','DejaVu_Sans',sans-serif] text-[11px] text-black">
      <div className="flex min-w-0 flex-1 flex-col">
        <header className="flex h-[18px] items-center bg-linear-to-r from-[#0a246a] to-[#a6caf0] pl-[3px] font-bold text-white">
          <Icon size={15}>
            <path d="M5 1h12v12H5z" fill="#b7dcf5" stroke="#5d8fb7" />
            <path d="M7 8l3-3 2 2 4-4" stroke="#fff" strokeWidth="1.500" />
            <circle cx="5" cy="8" r="3" fill="#e8b886" />
            <path d="M0 17c0-5 2-6 5-6s5 1 5 6z" fill="#3fae49" />
          </Icon>
          <h1 className="ml-[2px] flex items-center whitespace-pre">
            3508
            <span className="h-3 w-[20px] bg-[#1c3877]" />
            : JPHoldings-Real - [GBPUSD,H1]
          </h1>
          <CaptionButtons />
        </header>

        <nav className="flex h-[21px] items-center border-b border-[#808080] pl-1">
          <PagesIcon size={16} />
          <div className="flex gap-4 pl-[5px]">
            {menus.map((menu) => (
              <button key={menu} type="button">{menu}</button>
            ))}
          </div>
          <CaptionButtons />
        </nav>

        <div className="flex h-[27px] items-center border-t border-white">
          <div className="flex h-[26px] items-center border-r border-b border-[#808080] pr-[2px]">
            <Grip />
            <ToolButton label="New chart" menu><NewChartIcon /></ToolButton>
            <ToolButton label="Profiles" menu><ProfilesIcon /></ToolButton>
            <Separator />
            <div className="flex gap-[2px]">
              <ToolButton label="Market Watch" pressed><MarketWatchIcon /></ToolButton>
              <ToolButton label="Data Window"><CrosshairIcon /></ToolButton>
              <ToolButton label="Favorites" pressed><StarFolderIcon /></ToolButton>
              <ToolButton label="Navigator" pressed><NavigatorIcon /></ToolButton>
              <ToolButton label="Strategy Tester"><TesterIcon /></ToolButton>
            </div>
            <Separator />
            <button type="button" className="flex h-[23px] w-[83px] items-center gap-[2px] pl-1 whitespace-nowrap">
              <NewOrderIcon />
              New Order
            </button>
            <ToolButton label="MetaEditor"><BookIcon /></ToolButton>
            <button
              type="button"
              aria-pressed="true"
              className={clsx(
                "ml-1 flex h-[23px] items-center gap-1 border border-[#808080] border-r-white border-b-white px-[3px] whitespace-nowrap",
                DITHER,
              )}
            >
              <AutoTradingIcon />
              AutoTrading
            </button>
          </div>
          <div className="flex h-[26px] items-center border-r border-b border-l border-[#808080] border-l-white pr-[2px]">
            <Grip />
            <div className="flex gap-[2px]">
              <ToolButton label="Bar chart" pressed><BarChartIcon /></ToolButton>
              <ToolButton label="Candlesticks"><CandleIcon /></ToolButton>
              <ToolButton label="Line chart"><LineChartIcon /></ToolButton>
            </div>
            <Separator />
            <div className="flex gap-[2px] pr-px">
              <ToolButton label="Zoom in"><ZoomIcon plus /></ToolButton>
              <ToolButton label="Zoom out"><ZoomIcon /></ToolButton>
              <ToolButton label="Tile windows"><TileIcon /></ToolButton>
            </div>
            <Separator />
            <div className="flex gap-[2px]">
              <ToolButton label="Auto scroll" pressed><ScrollIcon /></ToolButton>
              <ToolButton label="Chart shift" pressed><ShiftIcon /></ToolButton>
            </div>
            <Separator />
            <ToolButton label="Indicators" menu><IndicatorsIcon /></ToolButton>
            <ToolButton label="Periods" menu><ClockIcon /></ToolButton>
            <ToolButton label="Templates" menu><TemplateIcon /></ToolButton>
          </div>
          <div className="ml-auto flex items-center gap-3 pr-[6px]">
            <button type="button" aria-label="Search">
              <svg width="15" height="15" fill="none" aria-hidden="true">
                <circle cx="9" cy="5.500" r="4" fill="#e6f1fd" stroke="#5b8fe0" strokeWidth="1.500" />
                <path d="M6 8.500L1.500 13" stroke="#2f62c8" strokeWidth="2.500" />
              </svg>
            </button>
            <button type="button" aria-label="Chat">
              <svg width="22" height="17" aria-hidden="true">
                <path d="M14 1c4 0 7 2 7 4.500S19 9.500 18 10l1 3-3-2.500C11 11 8 8.500 8 6s2-5 6-5z" fill="#f3f3f3" stroke="#8d8d8d" />
                <path d="M6 6c3 0 5 1.500 5 4s-2 3.500-4 3.500L4 16v-3c-2-.5-3-1.500-3-3 0-2.500 2-4 5-4z" fill="#fdfdfd" stroke="#8d8d8d" />
              </svg>
            </button>
          </div>
        </div>

        <div className="flex h-[27px] items-center border-t border-b border-white border-b-[#808080]">
          <div className="flex h-[25px] items-center border-r border-[#808080] pr-px">
            <Grip />
            <ToolButton label="Cursor" pressed>
              <Icon><path d="M5 2v12l3-3 2.500 5.500 2-1L10 10.500h4z" fill="#444" /></Icon>
            </ToolButton>
            <span className="w-[2px]" />
            <ToolButton label="Crosshair">
              <Icon><path d="M9 1v6M9 11v6M1 9h6M11 9h6M9 9h1" stroke="#555" /></Icon>
            </ToolButton>
            <Separator />
            <div className="flex gap-[2px]">
              <ToolButton label="Vertical line"><Icon><path d="M9.500 3v13" stroke="#555" /></Icon></ToolButton>
              <ToolButton label="Horizontal line"><Icon><path d="M3 9.500h12" stroke="#555" /></Icon></ToolButton>
              <ToolButton label="Trendline"><Icon><path d="M3 15L15 3" stroke="#555" strokeWidth="1.300" /></Icon></ToolButton>
              <ToolButton label="Equidistant channel">
                <Icon>
                  <path d="M1 8L12 1M2 13L15 5M5 5L3 15M9 3L6 14M13 1l-3 11M1 11l13-8" stroke="#555" />
                  <text x="11" y="16" fontSize="7" fill="#444">E</text>
                </Icon>
              </ToolButton>
              <ToolButton label="Fibonacci retracement">
                <Icon>
                  <path d="M2 2.500h14M2 6.500h14M2 10.500h8M2 14.500h8" stroke="#555" strokeDasharray="1 1" />
                  <text x="11" y="16" fontSize="7" fill="#444">F</text>
                </Icon>
              </ToolButton>
              <ToolButton label="Text"><span className="font-bold">A</span></ToolButton>
              <ToolButton label="Text label">
                <span className="h-[14px] w-3 border border-dotted border-[#555] text-[10px] leading-[12px] font-bold">T</span>
              </ToolButton>
              <ToolButton label="Arrows" menu>
                <Icon>
                  <path d="M2 6l3-3.500L8 6H6l3 4H7L4 6zM9 12l2-2 1.500 1.500L15 9l2 2-2.500 2.500L16 15l-4 1z" fill="#555" />
                </Icon>
              </ToolButton>
            </div>
          </div>
          <div className="flex h-[25px] items-center border-r border-l border-[#808080] border-l-white pr-px">
            <Grip />
            <div className="flex gap-[2px] text-[10px]">
              {periods.map((period) => (
                <ToolButton key={period} label={period} pressed={period === "H1"}>{period}</ToolButton>
              ))}
            </div>
          </div>
        </div>

        <main className="flex flex-1">
          <aside className="flex w-[217px] shrink-0 flex-col pr-[2px]">
            <MarketWatch />
            <Navigator />
          </aside>
          <ChartWindow />
        </main>

        <Terminal />
        <footer className="h-[2px]" />
      </div>
      <div className="flex w-[2px] shrink-0 flex-col bg-[#7a9fd0]">
        <span className="h-24 bg-black" />
      </div>
    </div>
  );
}
